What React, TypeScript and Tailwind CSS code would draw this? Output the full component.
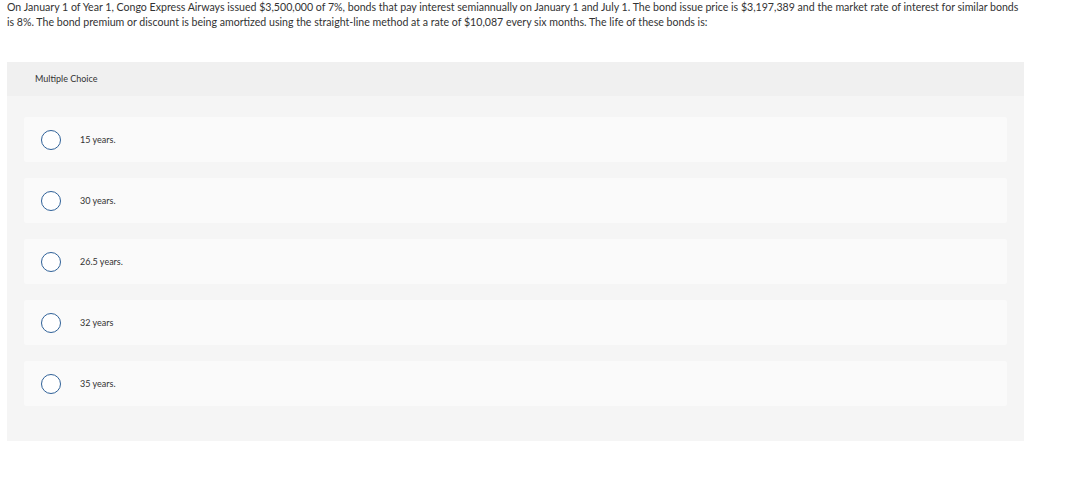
import React from 'react';

const options = ['15 years.', '30 years.', '26.5 years.', '32 years', '35 years.'];

const App: React.FC = () => {
  return (
    <div className="w-[1065px] h-[501px] bg-white text-[#333] font-['Lato','Liberation_Sans',sans-serif]">
      <p className="px-[7px] text-[10.6px] leading-[15px] w-[1032px]">
        On January 1 of Year 1, Congo Express Airways issued $3,500,000 of 7%, bonds that pay interest semiannually on January 1 and July 1. The bond issue price is $3,197,389 and the market rate of interest for similar bonds is 8%. The bond premium or discount is being amortized using the straight-line method at a rate of $10,087 every six months. The life of these bonds is:
      </p>

      <div className="ml-[7px] mt-[32px] w-[1017px] bg-[#f5f5f5]">
        <div className="h-[34px] bg-[#f0f0f0] flex items-center pl-[28px] text-[9px]">Multiple Choice</div>
        <div className="px-[17px] pt-[21px] pb-[35px] flex flex-col gap-[16px]">
          {options.map((o) => (
            <div key={o} className="h-[45px] bg-[#fafafa] rounded-[2px] flex items-center pl-[17px]">
              <span className="w-[20px] h-[20px] rounded-full border-[1.5px] border-[#2f6198] bg-white" />
              <span className="ml-[19px] text-[9px]">{o}</span>
            </div>
          ))}
        </div>
      </div>
    </div>
  );
};

export default App;
